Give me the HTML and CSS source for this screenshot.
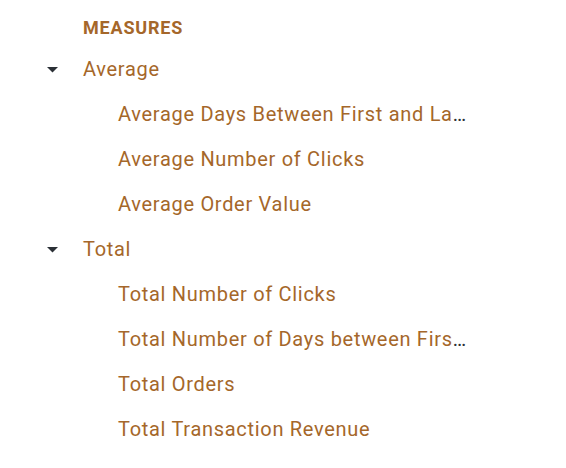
FILE: index.html
```html
<!DOCTYPE html>
<html>
<head>
<meta charset="utf-8">
<link rel="stylesheet" href="styles.css">
</head>
<body>
<div class="panel">
  <div class="heading">Measures</div>
  <div class="group">
    <div class="row group-row"><span class="caret"><svg width="11" height="6" viewBox="0 0 11 6"><path d="M0 0h11L5.5 5.5z" fill="#2b3036"/></svg></span><span class="label">Average</span></div>
    <div class="row item"><span class="label">Average Days Between First and Last Order</span></div>
    <div class="row item"><span class="label">Average Number of Clicks</span></div>
    <div class="row item"><span class="label">Average Order Value</span></div>
  </div>
  <div class="group">
    <div class="row group-row"><span class="caret"><svg width="11" height="6" viewBox="0 0 11 6"><path d="M0 0h11L5.5 5.5z" fill="#2b3036"/></svg></span><span class="label">Total</span></div>
    <div class="row item"><span class="label">Total Number of Clicks</span></div>
    <div class="row item"><span class="label">Total Number of Days between First and Last Order</span></div>
    <div class="row item"><span class="label">Total Orders</span></div>
    <div class="row item"><span class="label">Total Transaction Revenue</span></div>
  </div>
</div>
</body>
</html>
```
FILE: styles.css
```css
html, body {
  margin: 0;
  padding: 0;
  background: #ffffff;
}
body {
  font-family: Roboto, "Liberation Sans", sans-serif;
}
.panel {
  width: 472px;
  padding-top: 15px;
}
.heading {
  padding-left: 83px;
  height: 26px;
  line-height: 26px;
  font-size: 18px;
  font-weight: 700;
  letter-spacing: 0.8px;
  text-transform: uppercase;
  color: #a5672a;
  margin-bottom: 6px;
}
.row {
  height: 45px;
  line-height: 45px;
  font-size: 20px;
  letter-spacing: 0.7px;
  color: #2b3036;
  white-space: nowrap;
  overflow: hidden;
  text-overflow: ellipsis;
}
.row .label {
  color: #a5672a;
}
.group-row {
  display: flex;
  align-items: center;
}
.caret {
  width: 36px;
  padding-left: 47px;
  display: flex;
  align-items: center;
}
.item {
  padding-left: 118px;
}
```
